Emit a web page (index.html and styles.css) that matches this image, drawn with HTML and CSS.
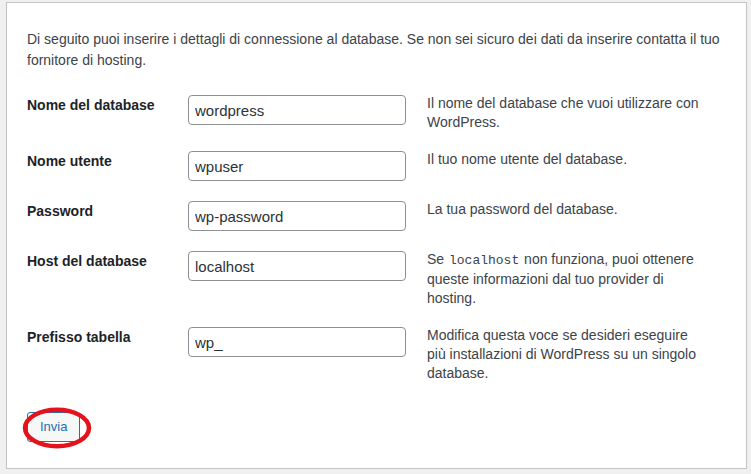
FILE: index.html
```html
<!DOCTYPE html>
<html lang="it">
<head>
<meta charset="utf-8">
<title>Configurazione di WordPress</title>
<link rel="stylesheet" href="styles.css">
</head>
<body>
<div class="card">
  <form>
    <p class="intro">Di seguito puoi inserire i dettagli di connessione al database. Se non sei sicuro dei dati da inserire contatta il tuo fornitore di hosting.</p>
    <table class="form-table">
      <tr>
        <th scope="row">Nome del database</th>
        <td class="field"><input type="text" value="wordpress"></td>
        <td class="desc">Il nome del database che vuoi utilizzare con WordPress.</td>
      </tr>
      <tr>
        <th scope="row">Nome utente</th>
        <td class="field"><input type="text" value="wpuser"></td>
        <td class="desc">Il tuo nome utente del database.</td>
      </tr>
      <tr>
        <th scope="row">Password</th>
        <td class="field"><input type="text" value="wp-password"></td>
        <td class="desc">La tua password del database.</td>
      </tr>
      <tr>
        <th scope="row">Host del database</th>
        <td class="field"><input type="text" value="localhost"></td>
        <td class="desc">Se <code>localhost</code> non funziona, puoi ottenere queste informazioni dal tuo provider di hosting.</td>
      </tr>
      <tr>
        <th scope="row">Prefisso tabella</th>
        <td class="field"><input type="text" value="wp_"></td>
        <td class="desc">Modifica questa voce se desideri eseguire più installazioni di WordPress su un singolo database.</td>
      </tr>
    </table>
    <div class="submit">
      <button type="button" class="button">Invia</button>
      <svg class="circle" width="72" height="44" viewBox="0 0 72 44" aria-hidden="true">
        <ellipse cx="35" cy="21" rx="32" ry="18.2" fill="none" stroke="#e3121b" stroke-width="4.5"/>
      </svg>
    </div>
  </form>
</div>
</body>
</html>
```

FILE: styles.css
```css
html, body {
  margin: 0;
  padding: 0;
}

body {
  background: #f0f0f1;
  color: #3c434a;
  font-family: "Liberation Sans", Arial, sans-serif;
  font-size: 14px;
}

.card {
  box-sizing: border-box;
  margin: 2px 4px 0 6px;
  padding: 26px 20px 26px 20px;
  background: #fff;
  border: 1px solid #c3c4c7;
  box-shadow: 0 1px 1px rgba(0, 0, 0, 0.04);
}

.intro {
  margin: 0 0 14px;
  line-height: 21px;
}

.form-table {
  border-collapse: collapse;
  border-spacing: 0;
}

.form-table th {
  width: 141px;
  padding: 11px 20px 0 0;
  text-align: left;
  vertical-align: top;
  font-weight: 700;
  font-size: 14px;
  line-height: 19px;
  color: #1d2327;
}

.form-table td.field {
  padding: 10px 21px 10px 0;
  vertical-align: top;
}

.form-table td.desc {
  width: 282px;
  padding: 9px 0;
  vertical-align: top;
  line-height: 19px;
}

.form-table input {
  box-sizing: border-box;
  display: block;
  width: 218px;
  height: 30px;
  margin: 0;
  padding: 0 6px;
  border: 1px solid #8c8f94;
  border-radius: 4px;
  background: #fff;
  color: #2c3338;
  font-family: "Liberation Sans", Arial, sans-serif;
  font-size: 15px;
}

code {
  font-family: "Liberation Mono", "Courier New", monospace;
  font-size: 13px;
  padding: 0 1px;
}

.submit {
  position: relative;
  margin-top: 20px;
  display: flex;
}

.button {
  box-sizing: border-box;
  height: 30px;
  padding: 0 12px;
  border: 1px solid #2271b1;
  border-radius: 3px;
  background: #f6f7f7;
  color: #2271b1;
  font-family: "Liberation Sans", Arial, sans-serif;
  font-size: 13px;
  line-height: 28px;
}

.circle {
  position: absolute;
  left: -5px;
  top: -5px;
  pointer-events: none;
}
```
